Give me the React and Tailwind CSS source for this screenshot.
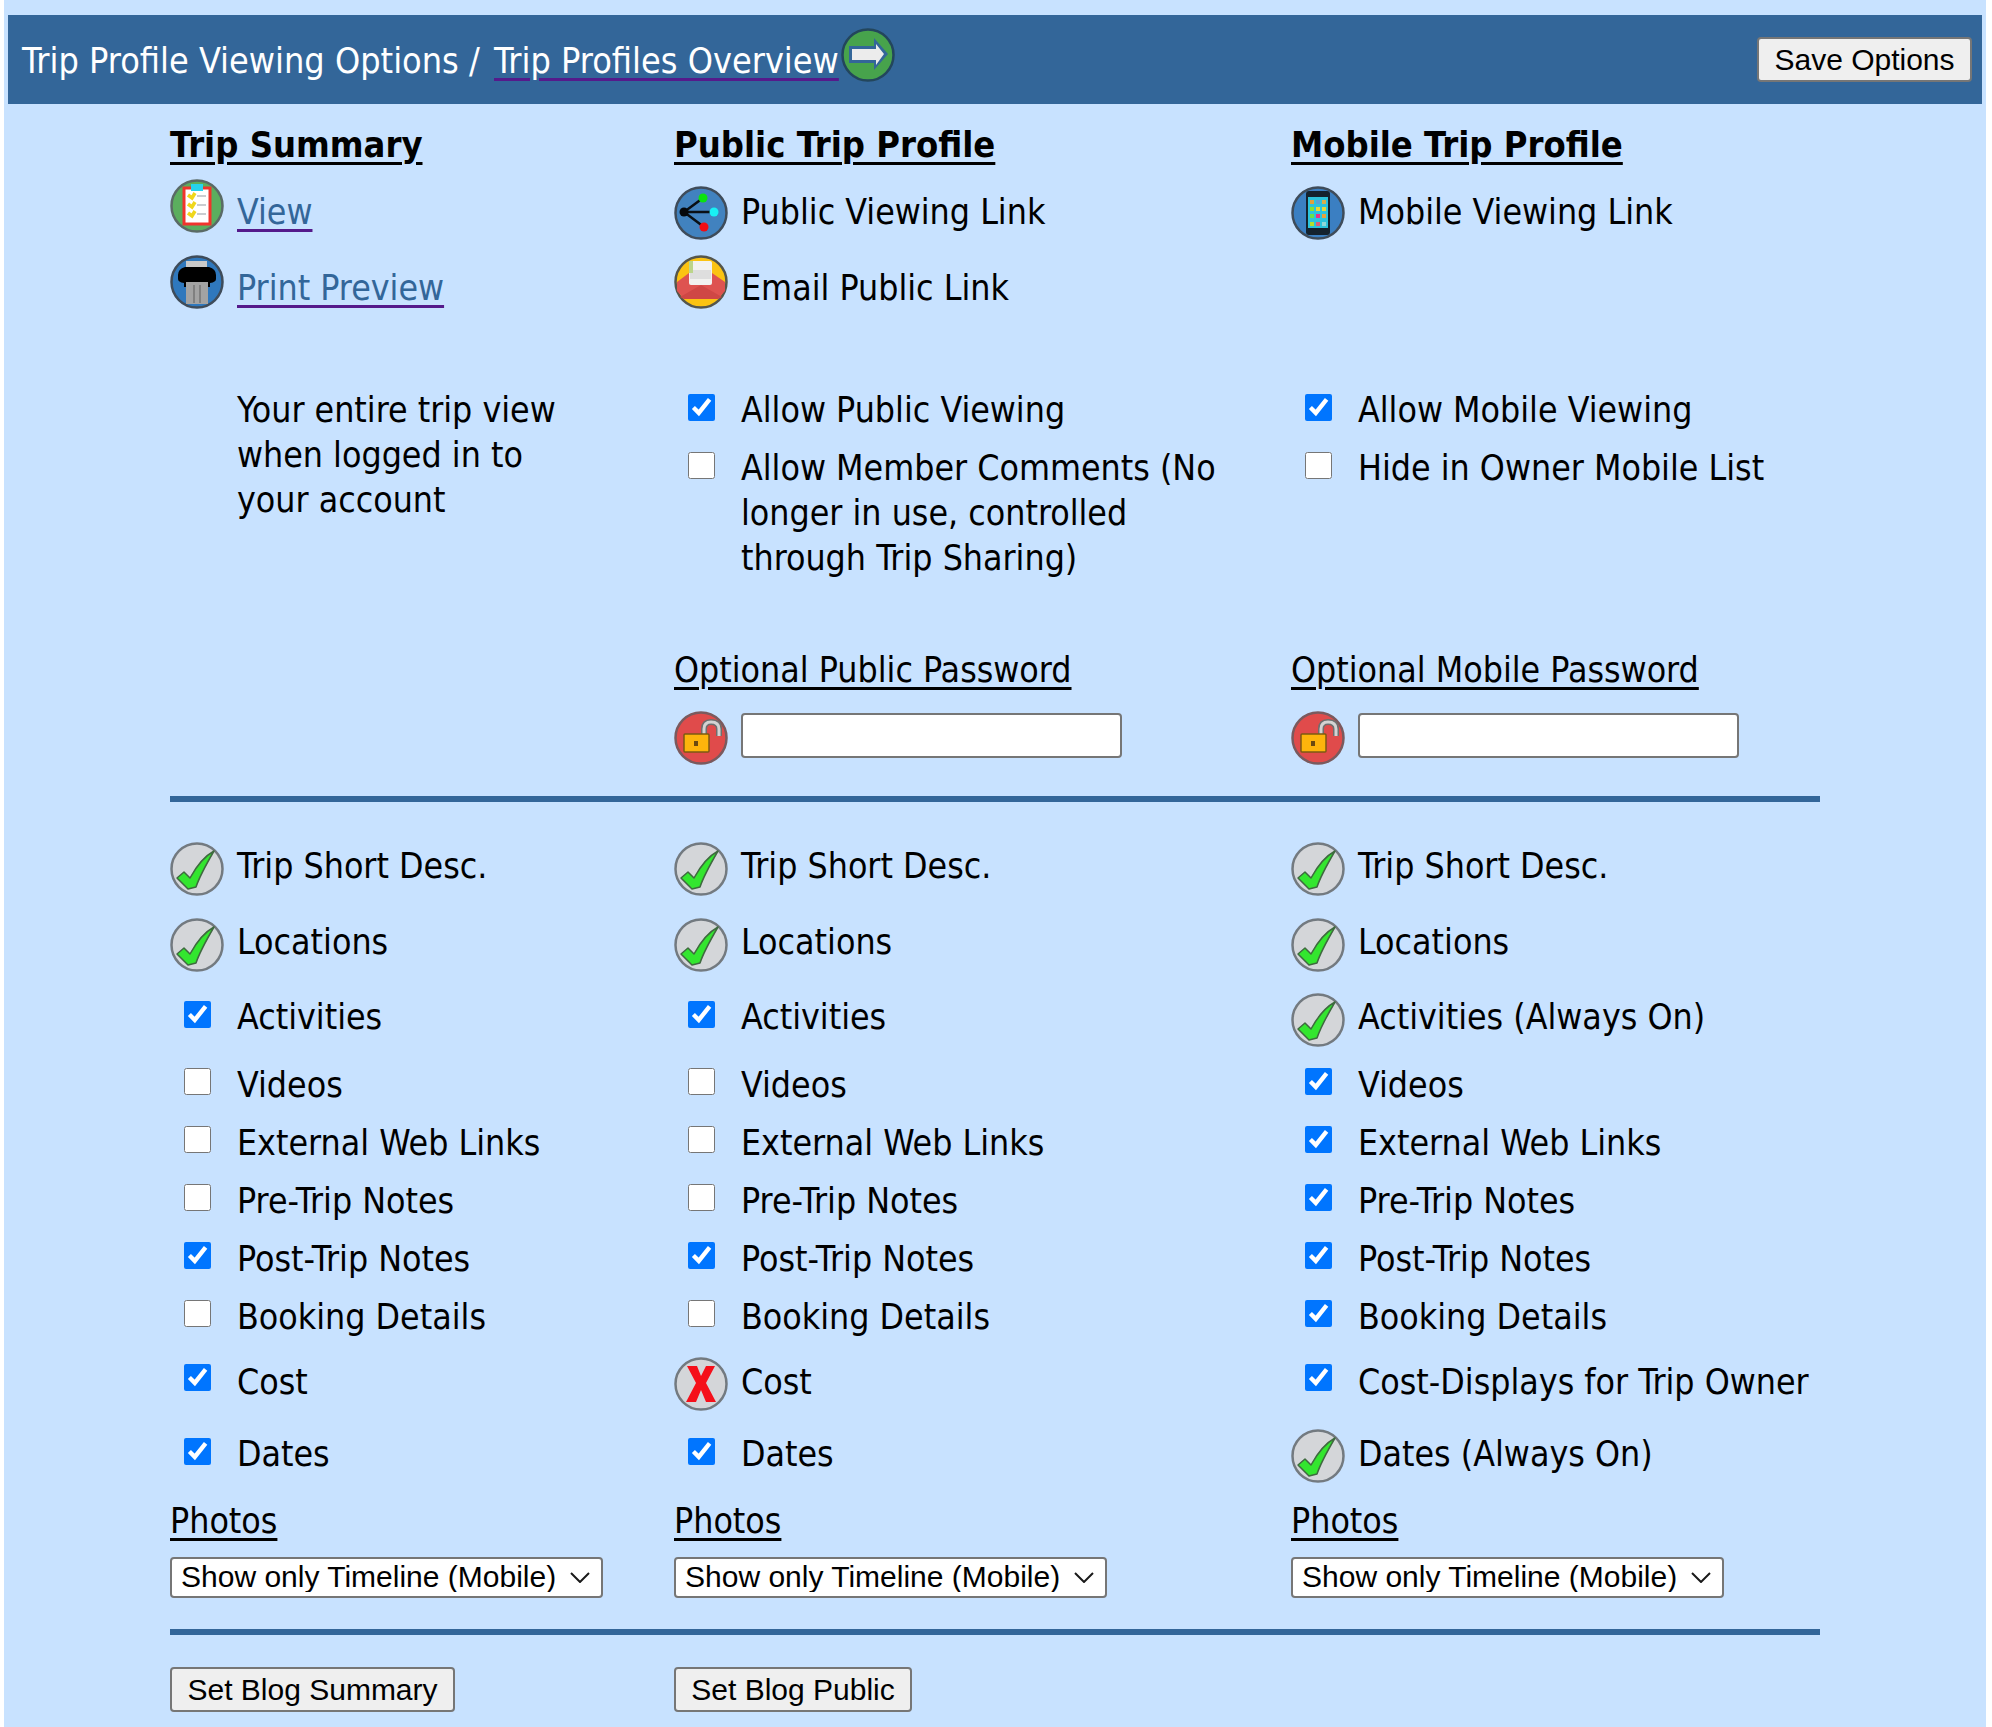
import React from 'react';

const sans = "font-['DejaVu_Sans_Condensed','DejaVu_Sans',sans-serif]";
const colGrid = 'grid grid-cols-[504px_617px_529px]';

// round badge wrapper used by every icon in the page
const Badge = ({ fill, ring = '#4b5a68', children }) => (
  <svg viewBox="0 0 54 54" className="w-[54px] h-[54px] shrink-0 block blur-[0.4px]">
    <circle cx="27" cy="27" r="25.5" fill={fill} stroke={ring} strokeWidth="2.5" />
    {children}
  </svg>
);

const CheckIcon = () => (
  <Badge fill="#d4d6d9" ring="#737a80">
    <path d="M7 36 L14 30 L20 36 C26 25 33 15 44 9 C37 21 30 33 26 45 L18 47 Z" fill="#33e62f" stroke="#3f6a3f" strokeWidth="1.5" strokeLinejoin="round" />
  </Badge>
);

const CrossIcon = () => (
  <Badge fill="#d4d6d9" ring="#737a80">
    <path d="M13 9 H23 L27 19 L32 9 H41 L32 26 L42 45 H32 L27 33 L22 45 H12 L22 26 Z" fill="#f5101a" />
  </Badge>
);

const ViewIcon = () => (
  <Badge fill="#5bae5e" ring="#5a6a66">
    <rect x="14" y="9" width="26" height="36" fill="#fff" stroke="#f0342c" strokeWidth="3" />
    <rect x="21" y="5" width="12" height="7" fill="#27d3ee" />
    <path d="M18 16 l4 3 l3 -5 M18 25 l4 3 l3 -5 M18 34 l4 3 l3 -5" fill="none" stroke="#efd71c" strokeWidth="3.5" />
    <path d="M27 17 h9 M27 26 h9 M27 35 h9" stroke="#c9ccd0" strokeWidth="2" />
  </Badge>
);

const PrintIcon = () => (
  <Badge fill="#2f78bd" ring="#3f4c5a">
    <rect x="16" y="6" width="21" height="6" fill="#c9c9c9" />
    <path d="M15 12 H39 Q46 14 46 20 V24 Q46 27 40 28 V32 H14 V28 Q8 27 8 24 V20 Q8 14 15 12 Z" fill="#000" />
    <rect x="16" y="27" width="22" height="22" fill="#a3a3a3" />
    <path d="M24 30 V48 M30 30 V48" stroke="#808080" strokeWidth="2" />
  </Badge>
);

const ShareIcon = () => (
  <Badge fill="#4182bf" ring="#3f4c5a">
    <path d="M10 26 L29 12 M10 26 H40 M10 26 L30 41" stroke="#0a0f14" strokeWidth="2.5" />
    <circle cx="10" cy="26" r="4.5" fill="#05080c" />
    <circle cx="29" cy="12" r="4.5" fill="#0be30f" />
    <circle cx="40" cy="26" r="4.5" fill="#18f0f5" />
    <circle cx="30" cy="41" r="4.5" fill="#f20d14" />
  </Badge>
);

const MailIcon = () => (
  <Badge fill="#fbc312" ring="#55564c">
    <path d="M3 27 L15 18 H38 L51 27 V36 L44 44 H10 L3 36 Z" fill="#de5350" />
    <rect x="15" y="6" width="23" height="24" rx="2" fill="#f2f2f0" />
    <rect x="16" y="15" width="21" height="9" fill="#dedede" />
    <path d="M15 6 H19 V18 H15 Z" fill="#bcd58a" />
    <path d="M6 42 L27 30 L48 42 L44 44 H10 Z" fill="#cf4745" />
  </Badge>
);

const PhoneIcon = () => (
  <Badge fill="#3b7fc2" ring="#3f4c5a">
    <rect x="15" y="5" width="24" height="44" rx="3" fill="#14222e" />
    <rect x="17" y="11" width="20" height="31" fill="#2cc3dc" />
    <rect x="19" y="14" width="4" height="4" fill="#e0a13c" />
    <rect x="25" y="14" width="4" height="4" fill="#58a0d8" />
    <rect x="31" y="14" width="4" height="4" fill="#d8b04a" />
    <rect x="19" y="21" width="4" height="4" fill="#8be02f" />
    <rect x="25" y="21" width="4" height="4" fill="#e6d83a" />
    <rect x="31" y="21" width="4" height="4" fill="#e6d83a" />
    <rect x="19" y="28" width="4" height="4" fill="#6be04a" />
    <rect x="25" y="28" width="4" height="4" fill="#e6308c" />
    <rect x="31" y="28" width="4" height="4" fill="#e6a13a" />
    <rect x="19" y="36" width="4" height="4" fill="#b4e02f" />
    <rect x="25" y="36" width="4" height="4" fill="#d8607c" />
    <rect x="31" y="36" width="4" height="4" fill="#90d8d8" />
  </Badge>
);

const LockIcon = () => (
  <Badge fill="#e04b4b" ring="#7a5a5e">
    <path d="M30 24 V18 Q30 11 37 11 Q45 11 45 18 V25" fill="none" stroke="#6e6e6e" strokeWidth="6" />
    <path d="M30 24 V18 Q30 11 37 11 Q45 11 45 18 V25" fill="none" stroke="#d3d3d3" strokeWidth="3" />
    <rect x="10" y="23" width="25" height="18" rx="1" fill="#fdb40c" stroke="#7c5a12" strokeWidth="1.5" />
    <rect x="20" y="30" width="4" height="5" fill="#6a4a10" />
  </Badge>
);

const ArrowIcon = () => (
  <Badge fill="#47a34c" ring="#23465c">
    <path d="M8 18 H33 V10 L47 26 L33 42 V35 H8 Z" fill="#336699" />
    <path d="M11 21 H35 V16 L43 26 L35 37 V32 H11 Z" fill="#ececec" />
  </Badge>
);

const Link = ({ children, className = '' }) => (
  <a href="#" className={`underline decoration-[#551a8b] decoration-[3px] underline-offset-[5px] ${className}`}>{children}</a>
);

const Box = ({ checked }) => (
  <span className="w-[54px] flex justify-center shrink-0 pt-[7px]">
    <input type="checkbox" defaultChecked={checked} className="w-[27px] h-[27px] m-0" />
  </span>
);

// lead is either an icon or a checkbox, text starts 67px from the column edge
const Item = ({ lead, text, leadClass = '', textClass = '' }) => (
  <div className="flex items-start h-full">
    <div className={leadClass}>{lead}</div>
    <div className={`ml-[13px] text-[35.4px] leading-[45px] whitespace-nowrap ${textClass}`}>{text}</div>
  </div>
);

const Row = ({ h, cols, className = '' }) => (
  <div className={`${colGrid} ${h} ${className}`}>
    {cols.map((c, i) => <div key={i}>{c}</div>)}
  </div>
);

const boxes = [
  ['Videos', false, false, true, 'h-[58px]'],
  ['External Web Links', false, false, true, 'h-[58px]'],
  ['Pre-Trip Notes', false, false, true, 'h-[58px]'],
  ['Post-Trip Notes', true, true, true, 'h-[58px]'],
  ['Booking Details', false, false, true, 'h-[64px]'],
];

const Title = ({ children }) => (
  <div className="text-[36px] font-bold leading-[45px] underline decoration-[3px] underline-offset-[5px]">{children}</div>
);

const Sub = ({ children }) => (
  <div className="text-[35.4px] leading-[45px] underline decoration-[3px] underline-offset-[5px] w-fit">{children}</div>
);

const Photos = () => (
  <div className="relative w-[433px] h-[41px]">
    <select defaultValue="t" className="appearance-none w-full h-full bg-white border-2 border-[#767676] rounded-[4px] pl-[9px] pb-[2px] leading-none font-['Liberation_Sans',sans-serif] text-[30px] text-black">
      <option value="t">Show only Timeline (Mobile)</option>
    </select>
    <svg viewBox="0 0 20 11" className="absolute right-[13px] top-[15px] w-[20px] h-[11px]">
      <path d="M1 1 L10 10 L19 1" fill="none" stroke="#1a1a1a" strokeWidth="2" />
    </svg>
  </div>
);

const Pwd = () => (
  <div className="flex items-start">
    <LockIcon />
    <input type="text" className="ml-[13px] mt-[2px] w-[381px] h-[45px] bg-white border-2 border-[#767676] rounded-[4px]" />
  </div>
);

const Btn = ({ children, className = '' }) => (
  <button className={`bg-[#efefef] border-2 border-[#767676] rounded-[4px] h-[45px] font-['Liberation_Sans',sans-serif] text-[30px] leading-none text-black ${className}`}>{children}</button>
);

export default function App() {
  return (
    <div className={`bg-white pl-[4px] pr-[6px] h-[1727px] overflow-hidden text-black ${sans}`}>
      <div className="bg-[#c8e2ff] h-full px-[4px] pt-[15px]">
        <div className="h-[89px] bg-[#336699] flex items-center justify-between pl-[14px] pr-[10px] text-white text-[35.7px] leading-[45px]">
          <div className="flex items-center pt-[2px]">
            <span className="whitespace-pre mr-[4px]">Trip Profile Viewing Options / </span>
            <Link>Trip Profiles Overview</Link>
            <span className="ml-[2px] -mt-[12px]"><ArrowIcon /></span>
          </div>
          <Btn className="w-[215px]">Save Options</Btn>
        </div>

        <div className="ml-[162px] w-[1650px]">
          <Row h="h-[65px]" className="items-end pb-[2px]" cols={[<Title>Trip Summary</Title>, <Title>Public Trip Profile</Title>, <Title>Mobile Trip Profile</Title>]} />
          <Row h="h-[86px]" className="pt-[17px]" cols={[
            <Item leadClass="-mt-[7px]" textClass="mt-[3px]" lead={<ViewIcon />} text={<Link className="text-[#336699]">View</Link>} />,
            <Item textClass="mt-[3px]" lead={<ShareIcon />} text="Public Viewing Link" />,
            <Item textClass="mt-[3px]" lead={<PhoneIcon />} text="Mobile Viewing Link" />,
          ]} />
          <Row h="h-[132px]" cols={[
            <Item textClass="mt-[10px]" lead={<PrintIcon />} text={<Link className="text-[#336699]">Print Preview</Link>} />,
            <Item textClass="mt-[10px]" lead={<MailIcon />} text="Email Public Link" />,
            null,
          ]} />
          <div className={`${colGrid} h-[260px]`}>
            <div className="pl-[67px] text-[35.4px] leading-[45px]">Your entire trip view<br />when logged in to<br />your account</div>
            <div>
              <div className="h-[58px]"><Item lead={<Box checked />} text="Allow Public Viewing" /></div>
              <div className="flex items-start">
                <Box />
                <div className="ml-[13px] text-[35.4px] leading-[45px]">Allow Member Comments (No<br />longer in use, controlled<br />through Trip Sharing)</div>
              </div>
            </div>
            <div>
              <div className="h-[58px]"><Item lead={<Box checked />} text="Allow Mobile Viewing" /></div>
              <Item lead={<Box />} text="Hide in Owner Mobile List" />
            </div>
          </div>
          <Row h="h-[64px]" cols={[null, <Sub>Optional Public Password</Sub>, <Sub>Optional Mobile Password</Sub>]} />
          <Row h="h-[85px]" cols={[null, <Pwd />, <Pwd />]} />
          <div className="h-[6px] bg-[#336699]" />

          <Row h="h-[76px]" className="mt-[40px]" cols={[
            <Item textClass="mt-[1px]" lead={<CheckIcon />} text="Trip Short Desc." />,
            <Item textClass="mt-[1px]" lead={<CheckIcon />} text="Trip Short Desc." />,
            <Item textClass="mt-[1px]" lead={<CheckIcon />} text="Trip Short Desc." />,
          ]} />
          <Row h="h-[76px]" cols={[
            <Item textClass="mt-[1px]" lead={<CheckIcon />} text="Locations" />,
            <Item textClass="mt-[1px]" lead={<CheckIcon />} text="Locations" />,
            <Item textClass="mt-[1px]" lead={<CheckIcon />} text="Locations" />,
          ]} />
          <Row h="h-[67px]" cols={[
            <Item lead={<Box checked />} text="Activities" />,
            <Item lead={<Box checked />} text="Activities" />,
            <Item leadClass="-mt-[1px]" lead={<CheckIcon />} text="Activities (Always On)" />,
          ]} />
          {boxes.map(([label, a, b, c, h]) => (
            <Row key={label} h={h} cols={[
              <Item textClass="mt-[1px]" lead={<Box checked={a} />} text={label} />,
              <Item textClass="mt-[1px]" lead={<Box checked={b} />} text={label} />,
              <Item textClass="mt-[1px]" lead={<Box checked={c} />} text={label} />,
            ]} />
          ))}
          <Row h="h-[74px]" cols={[
            <Item textClass="mt-[2px]" lead={<Box checked />} text="Cost" />,
            <Item textClass="mt-[2px]" lead={<CrossIcon />} text="Cost" />,
            <Item textClass="mt-[2px]" lead={<Box checked />} text="Cost-Displays for Trip Owner" />,
          ]} />
          <Row h="h-[67px]" cols={[
            <Item lead={<Box checked />} text="Dates" />,
            <Item lead={<Box checked />} text="Dates" />,
            <Item leadClass="-mt-[2px]" lead={<CheckIcon />} text="Dates (Always On)" />,
          ]} />
          <Row h="h-[59px]" cols={[<Sub>Photos</Sub>, <Sub>Photos</Sub>, <Sub>Photos</Sub>]} />
          <Row h="h-[72px]" cols={[<Photos />, <Photos />, <Photos />]} />
          <div className="h-[6px] bg-[#336699]" />
          <div className={`${colGrid} pt-[32px]`}>
            <div><Btn className="w-[285px]">Set Blog Summary</Btn></div>
            <div><Btn className="w-[238px]">Set Blog Public</Btn></div>
          </div>
        </div>
      </div>
    </div>
  );
}
